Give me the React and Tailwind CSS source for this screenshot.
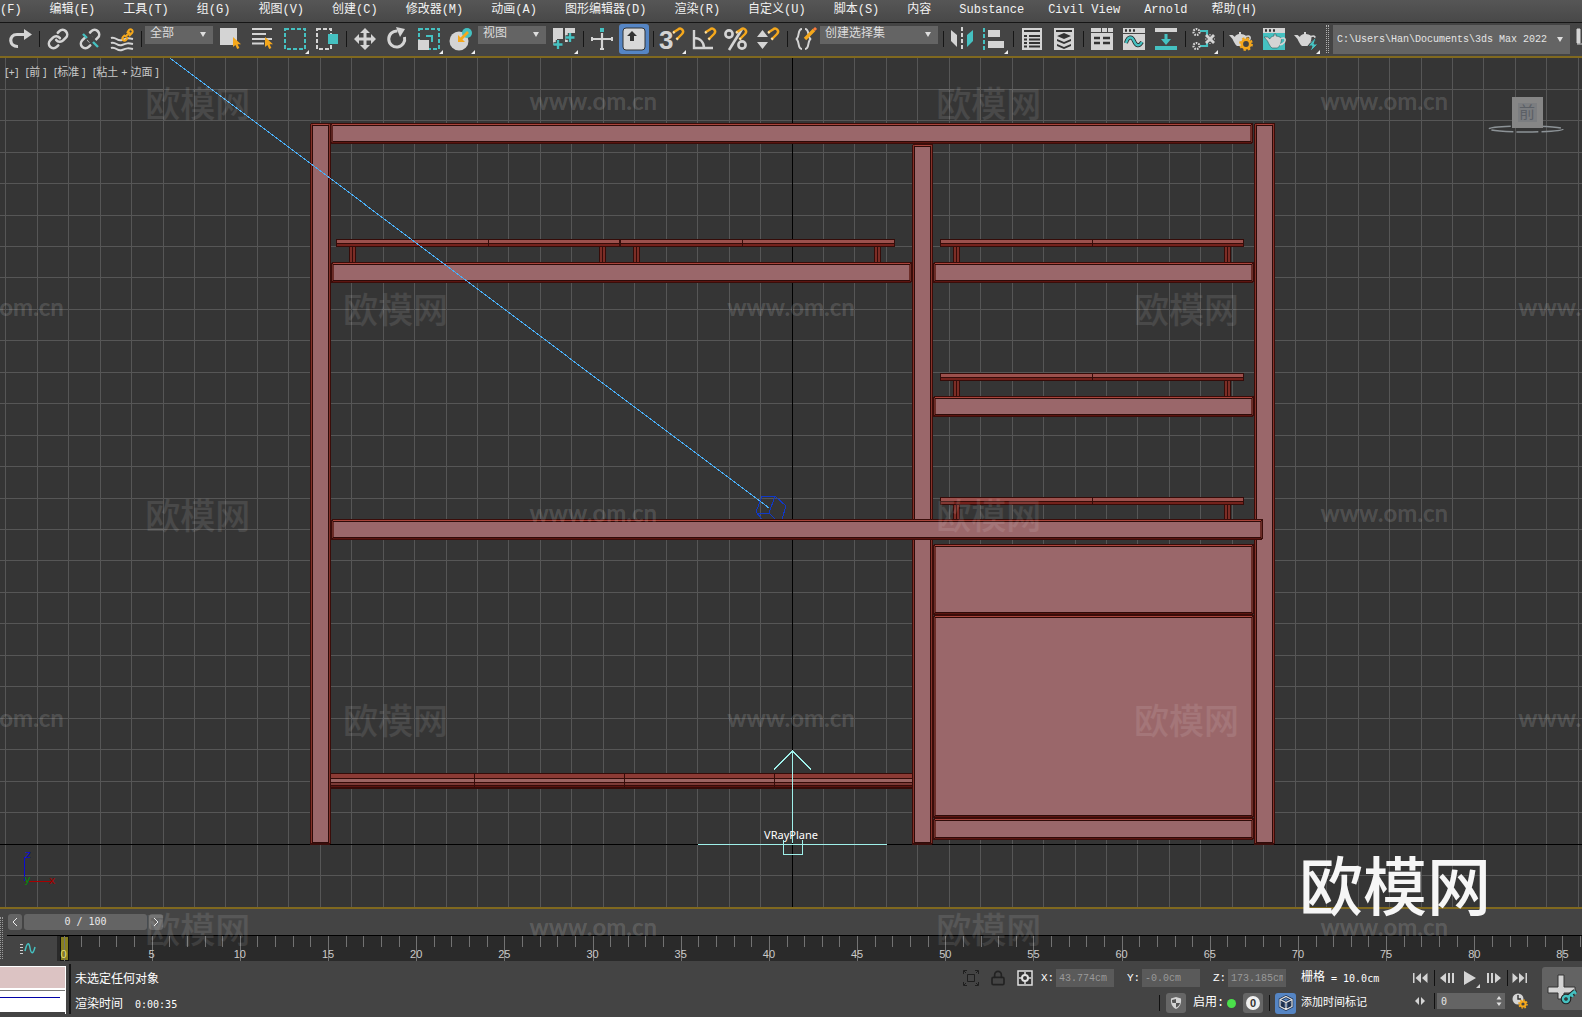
import { Lock } from 'lucide-react'

const LIGHT = '#d4d4d4'
const TEAL = '#45c1c1'
const ORANGE = '#f5a81c'

const MENUS = [
  '文件(F)', '编辑(E)', '工具(T)', '组(G)', '视图(V)', '创建(C)', '修改器(M)', '动画(A)',
  '图形编辑器(D)', '渲染(R)', '自定义(U)', '脚本(S)', '内容', 'Substance', 'Civil View', 'Arnold', '帮助(H)'
]

/* ---------- toolbar icons, all on a 32x32 canvas ---------- */

const Magnet = ({ x = 0, y = 0 }) => (
  <g transform={`translate(${x} ${y})`} fill="none">
    <path d="M3 4 7 1.5C10 -1 14 3 11 6L6 11" stroke={ORANGE} strokeWidth="2.4" />
    <path d="M2 5l1.6-1.2M5.4 11.6 6.8 10.2" stroke="#ffe0a0" strokeWidth="2.4" />
  </g>
)

const Cursor = ({ x, y }) => (
  <path transform={`translate(${x} ${y})`} d="M0 0v10l2.4-2 1.8 4 2.2-1-1.8-3.8H8z" fill={ORANGE} />
)

const Pot = ({ x = 0, y = 0 }) => (
  <g transform={`translate(${x} ${y})`}>
    <path d="M10 1h2v2c4 .6 5.500 2 5.500 3 0 4-2 7.500-4 9H8C6 13.500 5 11 3.500 8L0 4h3.500L6 6c0-1.500 1.500-2.500 4-3z" fill={LIGHT} />
    <path d="M17 5.500c4-1.500 5 1 3.500 3.500-1 1.500-3 2.500-5 3" fill="none" stroke={LIGHT} strokeWidth="1.600" />
  </g>
)

const Chain = () => (
  <g transform="translate(5 5) scale(.92)" fill="none" stroke={LIGHT} strokeWidth="2.800" strokeLinecap="round">
    <path d="M10 13a5 5 0 0 0 7.540.540l3-3a5 5 0 0 0-7.070-7.070l-1.720 1.710" />
    <path d="M14 11a5 5 0 0 0-7.540-.540l-3 3a5 5 0 0 0 7.070 7.070l1.710-1.710" />
  </g>
)

const ICONS = {
  redo: (
    <>
      <path d="M14 23.500C5 24 4 11.500 13 11.500h9" fill="none" stroke={LIGHT} strokeWidth="3.200" />
      <path d="M20 6l8 5.500-8 5.500z" fill={LIGHT} />
    </>
  ),
  link: <Chain />,
  unlink: (
    <>
      <Chain />
      <path d="M9 8l15 16" stroke="#444" strokeWidth="6" />
      <path d="M9 11l4 4M19 19l5 5" stroke={TEAL} strokeWidth="2.400" />
    </>
  ),
  bind: (
    <g fill="none" strokeWidth="2">
      <path d="M5 15c5-2 6 4 11 2s6-2 11-1M5 20c5-2 6 4 11 2s6-2 11-1M5 25c5-2 6 4 11 2s6-2 11-1" stroke={LIGHT} />
      <path d="M19 12l-2 2c-2 2 1 5 3 3l2-3M21 10l2-3c2-2 5 1 3 3l-3 3M19 14l5-5" stroke={ORANGE} />
    </g>
  ),
  select: <><path d="M5 5h17v17H5z" fill={LIGHT} /><Cursor x={18} y={14} /></>,
  byName: <><path d="M5 6h20M5 11h14M5 16h20M5 20.500h12" stroke={LIGHT} strokeWidth="2" /><Cursor x={18} y={14} /></>,
  region: <path d="M6 6h20v20H6z" fill="none" stroke={TEAL} strokeWidth="2" strokeDasharray="4 2" />,
  crossing: <><path d="M6 6h14v20H6z" fill="none" stroke={LIGHT} strokeWidth="2" strokeDasharray="4 2" /><path d="M17 11h10v10H17z" fill={TEAL} /></>,
  move: <path d="M16 5l5 5h-3.500v4.500H22V11l5 5-5 5v-3.500h-4.500V22H21l-5 5-5-5h3.500v-4.500H10V21l-5-5 5-5v3.500h4.500V10H11z" fill={LIGHT} />,
  rotate: <><path d="M23.500 14a8 8 0 1 1-7-6" fill="none" stroke={LIGHT} strokeWidth="3" /><path d="M15 4l9 2-5 8z" fill={LIGHT} /></>,
  scale: (
    <>
      <path d="M6 6h20v20H6z" fill="none" stroke={TEAL} strokeWidth="2" strokeDasharray="4 2" />
      <path d="M5 17h11v10H5z" fill={LIGHT} />
      <path d="M13 13h6v6" fill="none" stroke={TEAL} strokeWidth="2" />
    </>
  ),
  place: (
    <>
      <circle cx="14" cy="18" r="9.500" fill={LIGHT} />
      <circle cx="22" cy="10" r="5" fill={TEAL} />
      <path d="M23 9l-8 8" stroke={ORANGE} strokeWidth="2.600" />
      <path d="M13 12v7h7z" fill={ORANGE} />
    </>
  ),
  pivot: (
    <>
      <path d="M5 5h10v11H9v6H5zM17 5h10v5h-4v9h-6z" fill={LIGHT} />
      <path d="M10 17v9M5.500 21.500h9M22 10v9M17.500 14.500h9" stroke="#3c3c3c" strokeWidth="4.400" />
      <path d="M10 17v9M5.500 21.500h9M22 10v9M17.500 14.500h9" stroke={TEAL} strokeWidth="2.400" />
    </>
  ),
  manipulate: (
    <>
      <path d="M16 10v17M6 16h20" stroke={LIGHT} strokeWidth="2.200" />
      <path d="M5 14h2v4H5zM25 14h2v4h-2zM14 25h4v2h-4z" fill={LIGHT} />
      <path d="M14 5h4v4h-4z" fill={TEAL} />
    </>
  ),
  angle: <><path d="M6 7v18h19M6 15c6 0 10 4 10 10" fill="none" stroke={LIGHT} strokeWidth="2.400" /><Magnet x={15} y={5} /></>,
  percent: (
    <>
      <g fill="none" stroke={LIGHT} strokeWidth="2.600"><circle cx="9" cy="11" r="3.600" /><circle cx="22" cy="22" r="3.600" /><path d="M22 6L9 27" /></g>
      <Magnet x={14} y={5} />
    </>
  ),
  spinner: <><path d="M5 14l5.500-7 5.500 7zM5 19h11l-5.500 7z" fill={LIGHT} /><Magnet x={14} y={5} /></>,
  braces: (
    <>
      <path d="M12 6c-5 0-2 9-6 10 4 1 1 10 6 10M15 6c5 0 2 9 6 10-4 1-1 10-6 10" fill="none" stroke={LIGHT} strokeWidth="2" />
      <path d="M15 16l9-9" stroke={ORANGE} strokeWidth="3.400" />
      <path d="M24 5l2 2" stroke="#ff7a3c" strokeWidth="3" />
    </>
  ),
  mirror: (
    <>
      <path d="M5 7l6 5v12l-6-6z" fill={LIGHT} />
      <path d="M16 4v24" stroke={LIGHT} strokeWidth="2" strokeDasharray="4 2" />
      <path d="M27 7l-6 5v12l6-6z" fill={TEAL} />
    </>
  ),
  align: <><path d="M6 5v22" stroke={TEAL} strokeWidth="2" strokeDasharray="4 2" /><path d="M10 7h12v7H10zM10 18h16v7H10z" fill={LIGHT} /></>,
  explorer: (
    <>
      <path d="M6 5h20v22H6z" fill={LIGHT} />
      <path d="M8 8h16M8 13h3M13 13h11M8 16.500h3M13 16.500h11M8 20h3M13 20h11M8 23.500h3M13 23.500h11" stroke="#333" strokeWidth="2" />
    </>
  ),
  layers: (
    <>
      <path d="M6 5h20v22H6z" fill={LIGHT} />
      <path d="M8 8h16" stroke="#333" strokeWidth="2" />
      <path d="M16 10l7 3-7 3-7-3zM9 16l7 3 7-3v2l-7 3-7-3zM9 21l7 3 7-3v2l-7 3-7-3z" fill="#333" />
    </>
  ),
  ribbon: (
    <>
      <path d="M5 5h22v22H5z" fill={LIGHT} />
      <path d="M5 9.500h22M15.500 5v4M21.500 5v4" stroke="#444" />
      <path d="M8 15h6M17 15h7M8 20h6M17 20h7" stroke="#333" strokeWidth="2.600" />
    </>
  ),
  curves: (
    <>
      <path d="M5 5h22v22H5z" fill={LIGHT} />
      <path d="M7 7.500h2M11 7.500h2M15 7.500h2" stroke="#333" strokeWidth="2.400" />
      <path d="M5 10.500h22" stroke="#444" />
      <path d="M8 20c2-7 6-7 8-2s5 6 8 1" fill="none" stroke="#222" strokeWidth="4" />
      <path d="M8 20c2-7 6-7 8-2s5 6 8 1" fill="none" stroke={TEAL} strokeWidth="2.400" />
    </>
  ),
  download: <><path d="M5 5h22v4H5z" fill={LIGHT} /><path d="M14.500 11h3v5H21l-5 6-5-6h3.500zM5 23h22v4H5z" fill={TEAL} /></>,
  schematic: (
    <>
      <path d="M12 8h7v5M12 23h7v-5" fill="none" stroke={TEAL} strokeWidth="2.200" />
      <g fill="none" stroke={LIGHT} strokeWidth="2.200">
        <circle cx="8.500" cy="9" r="3" strokeDasharray="1.600 1" />
        <circle cx="8.500" cy="23" r="3" strokeDasharray="1.600 1" />
        <path d="M18 12l8 8M26 12l-8 8" strokeWidth="2.800" />
        <path d="M22 11v10M17 16h10" strokeWidth="1.200" strokeDasharray="1.500 1.500" />
      </g>
    </>
  ),
  renderSetup: (
    <>
      <Pot x={3} y={8} />
      <circle cx="20" cy="21" r="4.200" fill="#444" stroke={ORANGE} strokeWidth="2.600" />
      <circle cx="20" cy="21" r="6" fill="none" stroke={ORANGE} strokeWidth="1.800" strokeDasharray="2.400 2.300" />
    </>
  ),
  renderFrame: (
    <>
      <path d="M5 5h22v5H5z" fill={LIGHT} /><path d="M7 7.500h2M11 7.500h2M15 7.500h2" stroke="#333" strokeWidth="2.400" />
      <path d="M5 10h22v17H5z" fill={TEAL} />
      <g stroke="#2c5c5c" strokeWidth=".6"><Pot x={6} y={10} /></g>
    </>
  ),
  render: (
    <>
      <Pot x={4} y={8} />
      <path d="M25 15l-7 8h4l-2 6 8-8h-4l2-6z" fill={TEAL} stroke="#444" />
    </>
  )
}

const Glyph = ({ children }) => <svg viewBox="0 0 32 32" className="size-8 shrink-0">{children}</svg>

const Tool = ({ name, label, flyout }) => (
  <button aria-label={label} className="size-8 shrink-0">
    <Glyph>
      {ICONS[name]}
      {flyout ? <path d="M30 27v4h-4z" fill="#f0f0f0" /> : null}
    </Glyph>
  </button>
)

const Sep = () => <span className="ml-[3px] mr-0.5 h-4 w-px shrink-0 bg-[#161616]" />

const Dropdown = ({ label, value, className }) => (
  <div className={`relative mb-2 h-[18px] shrink-0 ${className}`}>
    <select aria-label={label} className="block size-full appearance-none rounded-none bg-[#646464] pb-1 pl-[5px] text-[12px] leading-[14px] text-[#dcdcdc]">
      <option>{value}</option>
    </select>
    <svg viewBox="0 0 8 6" className="pointer-events-none absolute right-1.5 top-1.5 h-1.5 w-2">
      <path d="M1 0h6L4 5z" fill="#dedede" />
    </svg>
  </div>
)

const Toolbar = () => (
  <div className="flex h-[33px] shrink-0 items-start overflow-hidden bg-[#444444] pl-1">
    <div className="flex items-center">
      <Tool name="redo" label="重做" />
      <Sep />
      <Tool name="link" label="链接" />
      <Tool name="unlink" label="断开链接" />
      <Tool name="bind" label="绑定到空间扭曲" />
      <Sep />
      <Dropdown label="选择过滤器" value="全部" className="ml-px mr-0.5 w-[68px]" />
      <Tool name="select" label="选择对象" />
      <Tool name="byName" label="按名称选择" />
      <Tool name="region" label="选择区域" flyout />
      <Tool name="crossing" label="窗口/交叉" />
      <Sep />
      <Tool name="move" label="移动" />
      <Tool name="rotate" label="旋转" />
      <Tool name="scale" label="缩放" flyout />
      <Tool name="place" label="放置" flyout />
      <Dropdown label="参考坐标系" value="视图" className="ml-px mr-0.5 w-[68px]" />
      <Tool name="pivot" label="使用轴点中心" flyout />
      <Sep />
      <Tool name="manipulate" label="选择并操纵" />
      <button aria-label="键盘快捷键覆盖" className="mx-px flex size-[30px] shrink-0 items-center justify-center rounded-[3px] bg-[#5585c4]">
        <svg viewBox="0 0 24 24" className="size-6">
          <rect x="1" y="1" width="22" height="22" rx="3" fill="#d8d8d8" stroke="#333" />
          <path d="M10 4l5 5h-3v5H8V9H5z" fill="#333" />
        </svg>
      </button>
      <Sep />
      <button aria-label="捕捉开关" className="size-8 shrink-0">
        <Glyph>
          <text x="3" y="26" fontFamily="Liberation Sans, sans-serif" fontSize="26" fontWeight="700" fill={LIGHT}>3</text>
          <Magnet x={15} y={5} />
          <path d="M30 27v4h-4z" fill="#f0f0f0" />
        </Glyph>
      </button>
      <Tool name="angle" label="角度捕捉" />
      <Tool name="percent" label="百分比捕捉" />
      <Tool name="spinner" label="微调器捕捉" />
      <Sep />
      <Tool name="braces" label="编辑命名选择集" />
      <Dropdown label="命名选择集" value="创建选择集" className="-ml-0.5 mr-0.5 w-[118px]" />
      <Sep />
      <Tool name="mirror" label="镜像" />
      <Tool name="align" label="对齐" flyout />
      <Sep />
      <Tool name="explorer" label="场景资源管理器" />
      <Tool name="layers" label="层资源管理器" />
      <Sep />
      <Tool name="ribbon" label="功能区" />
      <Tool name="curves" label="曲线编辑器" />
      <Tool name="download" label="图解视图" />
      <Sep />
      <Tool name="schematic" label="材质编辑器" flyout />
      <Sep />
      <Tool name="renderSetup" label="渲染设置" />
      <Tool name="renderFrame" label="渲染帧窗口" />
      <Tool name="render" label="渲染产品" flyout />
      <span className="mx-1 h-7 w-[3px] border-x border-dotted border-[#b0b0b0]" />
    </div>
    <div className="relative mt-0.5 h-[29px] min-w-0 flex-1">
      <select aria-label="项目文件夹" className="block size-full appearance-none rounded-none bg-[#646464] pl-1 font-['Liberation_Mono',monospace] text-[10px] text-[#e4e4e4]">
        <option>C:\Users\Han\Documents\3ds Max 2022</option>
      </select>
      <svg viewBox="0 0 8 6" className="pointer-events-none absolute right-1.5 top-3 h-1.5 w-2">
        <path d="M1 0h6L4 5z" fill="#dedede" />
      </svg>
    </div>
    <svg viewBox="0 0 12 32" className="h-8 w-3 shrink-0">
      <path d="M7 6h3v14H7zM7 21h5" stroke={LIGHT} fill={LIGHT} />
    </svg>
  </div>
)

/* ---------- viewport drawing ---------- */

const GRID = 31.45
const AXIS_X = 792
const AXIS_Y = 844

const gridColumns = Array.from({ length: 51 }, (_, i) => Math.floor(AXIS_X + (i - 25) * GRID))
const gridRows = Array.from({ length: 26 }, (_, i) => Math.floor(AXIS_Y + (i - 24) * GRID))

const Post = ({ x, y, h }) => (
  <g>
    <rect x={x} y={y} width="21" height={h} rx="2" fill="#3a0d0a" />
    <rect x={x + 1} y={y + 1} width="19" height={h - 3} fill="#85322a" />
    <rect x={x + 2} y={y + 2} width="17" height={h - 4} fill="#2e0b09" />
    <rect x={x + 3} y={y + 3} width="15" height={h - 6} fill="#9a676a" />
    <rect x={x + 3} y={y + 1} width="15" height="1" fill="#a8443b" />
  </g>
)

const Beam = ({ x, y, w, h = 21 }) => (
  <g>
    <rect x={x} y={y} width={w} height={h} rx="2" fill="#3a0d0a" />
    <rect x={x + 1} y={y + 2} width={w - 2} height={h - 4} fill="#6b2c27" />
    <rect x={x + 2} y={y + 1} width={w - 4} height="1" fill="#a8443b" />
    <rect x={x + 2} y={y + 2} width={w - 4} height="1" fill="#2e0b09" />
    <rect x={x + 3} y={y + 3} width={w - 6} height={h - 6} fill="#9a676a" />
    <rect x={x + 2} y={y + h - 3} width={w - 4} height="1" fill="#2e0b09" />
    <rect x={x + 2} y={y + h - 2} width={w - 4} height="1" fill="#5c1510" />
  </g>
)

const Rail = ({ x, y, w, mark, legs, legHeight }) => (
  <g>
    {legs.map((leg) => (
      <g key={leg}>
        <rect x={leg} y={y + 6} width="7" height={legHeight} fill="#350c09" />
        <rect x={leg + 1} y={y + 6} width="2" height={legHeight} fill="#7c2d26" />
        <rect x={leg + 4} y={y + 6} width="2" height={legHeight} fill="#7c2d26" />
      </g>
    ))}
    <rect x={x} y={y} width={w} height="8" rx="1" fill="#350c09" />
    <rect x={x + 1} y={y + 1} width={w - 2} height="3" fill="#9c514d" />
    <rect x={x + 1} y={y + 5} width={w - 2} height="2" fill="#75221c" />
    <rect x={mark} y={y} width="1" height="7" fill="#350c09" />
  </g>
)

const Scene = () => (
  <svg viewBox="0 58 1582 849" preserveAspectRatio="xMidYMid slice" className="absolute inset-0 size-full" shapeRendering="crispEdges">
    <g fill="#565656">
      {gridColumns.map((x) => <rect key={x} x={x} y="0" width="1" height="1000" />)}
      {gridRows.map((y) => <rect key={y} x="0" y={y} width="1582" height="1" />)}
    </g>
    <rect x={AXIS_X} y="0" width="1" height="1000" fill="#000" />
    <rect x="0" y={AXIS_Y} width="1582" height="1" fill="#000" />

    <g fill="none" stroke="#1038c8">
      <path d="M762 496h13l11 10-4 13M762 496l-6 16 6 7M775 496l-6 17h-12M769 513l6 6" />
    </g>

    {/* frame and shelves */}
    <Post x={912} y={144} h={701} />
    <Beam x={330} y={123} w={923} />
    <Post x={310} y={123} h={722} />
    <rect x="331" y="125" width="2" height="17" fill="#5c2420" />
    <Post x={1254} y={123} h={722} />
    <Rail x={336} y={239} w={284} mark={488} legs={[349, 599]} legHeight={18} />
    <Rail x={620} y={239} w={275} mark={742} legs={[633, 874]} legHeight={18} />
    <Rail x={940} y={239} w={304} mark={1092} legs={[953, 1224]} legHeight={18} />
    <Rail x={940} y={373} w={304} mark={1092} legs={[953, 1224]} legHeight={18} />
    <Rail x={940} y={497} w={304} mark={1092} legs={[953, 1224]} legHeight={18} />
    <Beam x={331} y={262} w={581} />
    <Beam x={933} y={262} w={321} />
    <Beam x={933} y={396} w={321} />
    <Beam x={331} y={519} w={932} />

    {/* drawer unit */}
    <Beam x={933} y={544} w={321} h={71} />
    <Beam x={933} y={615} w={321} h={203} />
    <Beam x={933} y={818} w={321} h={22} />

    {/* foot rail */}
    <rect x="331" y="773" width="581" height="16" fill="#350c09" />
    <rect x="331" y="774" width="581" height="4" fill="#8c3b35" />
    <rect x="331" y="779" width="581" height="3" fill="#9c6462" />
    <rect x="331" y="783" width="581" height="2" fill="#7c3a36" />
    <rect x="331" y="786" width="581" height="1" fill="#5c1510" />
    <path d="M474.500 773v14M624.500 773v14M774.500 773v14" stroke="#350c09" />

    <path d="M170 58L769 508" stroke="#4aaef5" fill="none" />

    {/* light plane */}
    <g fill="none" stroke="#9ff0ea">
      <path d="M792.500 751v92M774 769.500l18.500-18.500 18.500 18.500" />
      <path d="M698 844.500h189M783.500 840v14h19v-14" />
    </g>
    <text x="791" y="839" textAnchor="middle" fontFamily="Noto Sans, sans-serif" fontSize="11" fill="#fff">VRayPlane</text>

    {/* axis tripod */}
    <path d="M24.500 857v24" stroke="#0b0bd0" />
    <path d="M29 881.500h22" stroke="#a80000" />
    <g fontFamily="DejaVu Sans, sans-serif" fontSize="11">
      <text x="25" y="858" fill="#0b0bd0">z</text>
      <text x="24" y="883" fill="#0a8a0a">y</text>
      <text x="49" y="884" fill="#a80000">x</text>
    </g>

    {/* view cube */}
    <g shapeRendering="auto">
      <ellipse cx="1526" cy="129" rx="37" ry="3" fill="none" stroke="#8c9296" strokeWidth="1.500" strokeDasharray="22 3" />
      <path d="M1512 97h31v31h-31z" fill="#868686" />
      <path d="M1518 103h19v19h-19z" fill="#7b7d80" />
      <text x="1527" y="118" textAnchor="middle" fontFamily="Noto Sans CJK SC, sans-serif" fontSize="16" fill="#5c6066">前</text>
    </g>
  </svg>
)

const Viewport = () => (
  <main className="relative min-h-[400px] flex-1 overflow-hidden border-y-2 border-[#80691f] bg-[#353535]">
    <Scene />
    <div className="absolute left-[5px] top-1.5 flex gap-[7px] text-[11px] leading-4 text-[#c8c8c8]">
      <button>[+]</button>
      <button>[前 ]</button>
      <button>[标准 ]</button>
      <button>[粘土 + 边面 ]</button>
    </div>
  </main>
)

/* ---------- time line ---------- */

const FRAME = 17.635
const frames = Array.from({ length: 87 }, (_, i) => i)

const Timeline = () => (
  <section className="flex h-[52px] shrink-0 bg-[#444444]">
    <span className="mt-2 h-[42px] w-[3px] border-x border-dotted border-[#9a9a9a]" />
    <div className="ml-1 flex min-w-0 flex-1 flex-col">
      <div className="flex h-[26px] items-center gap-0.5 pl-px font-['DejaVu_Sans_Mono',monospace] text-[10px] text-[#e8e8e8]">
        <button aria-label="上一帧" className="flex h-4 w-3.5 items-center justify-center rounded-[3px] bg-[#646464]">
          <svg viewBox="0 0 8 10" className="h-2.5 w-2"><path d="M6 1L2 5l4 4" fill="none" stroke="#eee" /></svg>
        </button>
        <button className="h-4 w-[123px] rounded-[3px] bg-[#646464] leading-4">0 / 100</button>
        <button aria-label="下一帧" className="flex h-4 w-3.5 items-center justify-center rounded-[3px] bg-[#646464]">
          <svg viewBox="0 0 8 10" className="h-2.5 w-2"><path d="M2 1l4 4-4 4" fill="none" stroke="#eee" /></svg>
        </button>
      </div>
      <div className="flex h-[26px] border-t border-black">
        <button aria-label="打开迷你曲线编辑器" className="w-[50px] shrink-0">
          <svg viewBox="0 0 50 24" className="h-6 w-[50px]">
            <path d="M13 7.500h3M13 10.500h3M13 13.500h3M13 16.500h3" stroke="#d0d0d0" />
            <path d="M18 14c2-9 4-9 5-3s3 7 5-1" fill="none" stroke={TEAL} strokeWidth="1.500" />
          </svg>
        </button>
        <svg className="h-[25px] min-w-0 flex-1 bg-[#2a2a2a]" shapeRendering="crispEdges">
          <rect x="3" y="0" width="9" height="25" fill="#111" />
          <rect x="4" y="1" width="7" height="23" fill="#878020" />
          {frames.map((f) => (
            <rect key={f} x={Math.floor(7 + f * FRAME)} y="0" width="1" height={f % 5 ? 11 : 25} fill="#727272" />
          ))}
          {frames.filter((f) => f % 5 === 0).map((f) => (
            <text key={f} x={6.5 + f * FRAME} y="22" textAnchor="middle" fontFamily="Liberation Sans, sans-serif" fontSize="11" fill={f ? '#cacaca' : '#e6de70'}>{f}</text>
          ))}
        </svg>
      </div>
    </div>
  </section>
)

/* ---------- status bar ---------- */

const Coord = ({ axis, value }) => (
  <label className="flex items-center">
    <span className="w-[15px] text-[11px] text-white">{axis}:</span>
    <input defaultValue={value} className="h-[18px] w-[58px] bg-[#5a5a5a] px-[3px] text-[10px] text-[#999]" />
  </label>
)

const Divider = () => <span className="h-4 w-px shrink-0 bg-[#111]" />

const TransportButton = ({ label, d, className = 'w-[29px]' }) => (
  <button aria-label={label} className={`flex justify-center ${className}`}>
    <svg viewBox="0 0 16 14" className="h-3.5 w-4"><path d={d} fill={LIGHT} /></svg>
  </button>
)

const StatusBar = () => (
  <footer className="flex h-14 shrink-0 overflow-hidden bg-[#444444] font-['Liberation_Mono','Noto_Sans_CJK_SC',monospace] text-[12px] text-white">
    <div className="mt-[5px] h-12 w-[66px] shrink-0 border-r border-white">
      <div className="h-6 border-b-2 border-t border-white bg-[#dcc3c3]" />
      <div className="h-[22px] border-t border-[#777] bg-white pt-1.5">
        <div className="mr-[5px] h-px bg-[#0000a8]" />
      </div>
    </div>
    <span className="mx-[3px] my-[3px] w-0.5 shrink-0 bg-[#161616]" />
    <div className="flex flex-col justify-between pb-[3px] pl-px pt-2.5 leading-[18px]">
      <p>未选定任何对象</p>
      <p className="flex gap-3">渲染时间 <span className="font-['DejaVu_Sans_Mono',monospace] text-[10px]">0:00:35</span></p>
    </div>

    <div className="ml-auto flex shrink-0 flex-col gap-1 pt-[7px]">
      <div className="flex h-5 items-center justify-end">
        <button aria-label="孤立当前选择" className="mr-[11px]">
          <svg viewBox="0 0 16 16" className="size-4" fill="none" stroke="#1f1f1f">
            <path d="M4.500 4.500h7v7h-7zM.500 4V.500H4M12 .500h3.500V4M15.500 12v3.500H12M4 15.500H.500V12M1 1l2 2M15 1l-2 2M1 15l2-2M15 15l-2-2" />
          </svg>
        </button>
        <button aria-label="锁定选择" className="mr-[11px]"><Lock className="size-4" color="#222" strokeWidth={2.5} /></button>
        <button aria-label="变换输入模式" className="mr-2">
          <svg viewBox="0 0 16 16" className="size-4">
            <path d="M1 1h14v14H1z" fill="#333" stroke="#e0e0e0" strokeWidth="1.500" />
            <circle cx="8" cy="8" r="3" fill="none" stroke="#e0e0e0" strokeWidth="2" />
            <path d="M8 2v3M8 11v3M2 8h3M11 8h3" stroke="#e0e0e0" strokeWidth="1.500" />
          </svg>
        </button>
        <div className="flex gap-[13px]">
          <Coord axis="X" value="43.774cm" />
          <Coord axis="Y" value="-0.0cm" />
          <Coord axis="Z" value="173.185cm" />
        </div>
        <p className="ml-[15px] flex w-[101px] items-center gap-1.5 whitespace-nowrap">栅格<span className="font-['DejaVu_Sans_Mono',monospace] text-[10px]">= 10.0cm</span></p>
      </div>
      <div className="flex h-[22px] items-center justify-end">
        <Divider />
        <button aria-label="安全" className="ml-1.5 flex size-5 items-center justify-center rounded-[3px] bg-[#666]">
          <svg viewBox="0 0 14 14" className="size-3.5">
            <path d="M7 1l5 1.500c.500 5-1 8.500-5 10.500-4-2-5.500-5.500-5-10.500z" fill={LIGHT} />
            <path d="M7 3v4H3.500C3 5.500 3 4.500 3 4zM7 7h4c-.600 2-1.800 3.500-4 4.600z" fill="#555" />
          </svg>
        </button>
        <span className="ml-[7px] w-[30px] whitespace-nowrap">启用:</span>
        <span className="mx-1 size-[9px] rounded-full bg-[#4be04b]" />
        <button className="ml-[3px] flex size-5 items-center justify-center rounded-[3px] bg-[#666]">
          <span className="size-3.5 rounded-full bg-[#efefef] text-center font-['Liberation_Sans',sans-serif] text-[11px] font-bold leading-[14px] text-[#333]">0</span>
        </button>
        <span className="w-1.5" />
        <Divider />
        <button aria-label="时间标记" className="ml-[5px] mr-[5px] flex size-[21px] items-center justify-center rounded-[3px] bg-[#5585c4]">
          <svg viewBox="0 0 16 16" className="size-4">
            <path d="M8 1.500l6 3v7l-6 3-6-3v-7zM2 4.500l6 3 6-3M8 7.500v7M5 6v6l-3-3M11 6v6l3-3" fill="none" stroke="#20304a" strokeWidth="2.600" />
            <path d="M8 1.500l6 3v7l-6 3-6-3v-7zM2 4.500l6 3 6-3M8 7.500v7" fill="none" stroke="#e6e6e6" strokeWidth="1.200" />
          </svg>
        </button>
        <button className="w-[101px] whitespace-nowrap text-left text-[11px]">添加时间标记</button>
      </div>
    </div>

    <div className="ml-[3px] flex w-[132px] shrink-0 flex-col gap-1 pt-[7px]">
      <div className="flex h-5 items-center">
        <TransportButton label="转至开头" d="M1 2h1.500v10H1zM9 2v10L3.500 7zM15.500 2v10L10 7z" />
        <Divider />
        <TransportButton label="上一帧" className="w-6" d="M7 2v10L1 7zM9 2h2v10H9zM13 2h2v10h-2z" />
        <button aria-label="播放" className="w-[22px]">
          <svg viewBox="0 0 22 20" className="h-5 w-[22px]"><path d="M5 3l12 7-12 7zM21 16v4h-4z" fill={LIGHT} /></svg>
        </button>
        <TransportButton label="下一帧" className="w-[26px]" d="M1 2h2v10H1zM5 2h2v10H5zM9 2v10l6-5z" />
        <Divider />
        <TransportButton label="转至结尾" className="w-6" d="M.500 2v10L6 7zM7 2v10l5.500-5zM13.500 2H15v10h-1.500z" />
      </div>
      <div className="flex h-[18px] items-center">
        <TransportButton label="关键点模式" d="M7 3v8L3 7zM9 3v8l4-4z" />
        <Divider />
        <div className="relative ml-0.5">
          <input aria-label="当前帧" defaultValue="0" className="block h-4 w-[68px] bg-[#646464] pl-1 font-['DejaVu_Sans_Mono',monospace] text-[10px] text-[#e4e4e4]" />
          <svg viewBox="0 0 8 12" className="absolute right-0.5 top-0.5 h-3 w-2"><path d="M1.500 4.500h5L4 1zM1.500 7.500h5L4 11z" fill="#e0e0e0" /></svg>
        </div>
        <button aria-label="时间配置" className="ml-[7px]">
          <svg viewBox="0 0 16 16" className="size-4">
            <circle cx="6" cy="6" r="5.500" fill={LIGHT} /><path d="M6 2v4h3" fill="none" stroke="#333" strokeWidth="1.400" />
            <circle cx="11" cy="11" r="2.600" fill="#444" stroke={ORANGE} strokeWidth="2" />
            <circle cx="11" cy="11" r="4" fill="none" stroke={ORANGE} strokeWidth="1.500" strokeDasharray="1.600 1.500" />
          </svg>
        </button>
      </div>
    </div>

    <button aria-label="设置关键点" className="ml-[5px] mt-1.5 h-[43px] w-10 shrink-0 rounded-l-[3px] bg-[#636363]">
      <svg viewBox="0 0 40 42" className="h-[42px] w-10">
        <path d="M16 7h6v12h11v6H22v6h-6v-6H6v-6h10z" fill={LIGHT} stroke="#333" />
        <g fill="none" stroke="#222" strokeWidth="4.600">
          <circle cx="24" cy="31" r="3" /><path d="M26 29l7-6M29 26l2 3M32 23l1 3" />
        </g>
        <g fill="none" stroke={TEAL} strokeWidth="2.400">
          <circle cx="24" cy="31" r="3" /><path d="M26 29l7-6M29 26l2 3M32 23l2 3" />
        </g>
      </svg>
    </button>
  </footer>
)

/* ---------- watermarks ---------- */

const ROWS = [103, 309, 515, 720, 929]
const marks = ROWS.flatMap((y, row) =>
  Array.from({ length: 5 }, (_, i) => {
    const step = row % 2 ? i : i + 0.5
    return { x: step * 25, y, logo: i % 2 === (row % 2 ? 1 : 0) }
  })
)

const Watermarks = () => (
  <div className="pointer-events-none absolute inset-0 overflow-hidden font-['Lato','Noto_Sans_CJK_SC',sans-serif] leading-none">
    {marks.map(({ x, y, logo }) => (
      <span
        key={`${x}-${y}`}
        style={{ left: `${x}%`, top: y }}
        className={`absolute -translate-x-1/2 -translate-y-1/2 whitespace-nowrap ${logo ? 'text-[35px] font-medium text-white/10' : 'pb-1 text-[24px] font-bold text-white/15'}`}
      >
        {logo ? '欧模网' : 'www.om.cn'}
      </span>
    ))}
    <span className="absolute bottom-[99px] right-[91px] text-[64px] font-medium text-[#f6f6f6]">欧模网</span>
  </div>
)

const App = () => (
  <div className="relative flex min-h-screen flex-col overflow-hidden bg-[#444444] font-['Noto_Sans','Noto_Sans_CJK_SC',sans-serif]">
    <nav className="flex h-[23px] shrink-0 items-center gap-7 overflow-hidden border-b border-[#161616] bg-linear-to-b from-[#565656] to-[#484848] pb-0.5 font-['Liberation_Mono','Noto_Sans_CJK_SC',monospace] text-[12px] leading-4 text-[#f2f2f2]">
      {MENUS.map((menu) => (
        <button key={menu} className={`shrink-0 whitespace-nowrap first:-ml-6 ${/^[A-Z]/.test(menu) ? '-mr-1' : ''}`}>{menu}</button>
      ))}
    </nav>
    <Toolbar />
    <Viewport />
    <Timeline />
    <StatusBar />
    <Watermarks />
  </div>
)

export default App
